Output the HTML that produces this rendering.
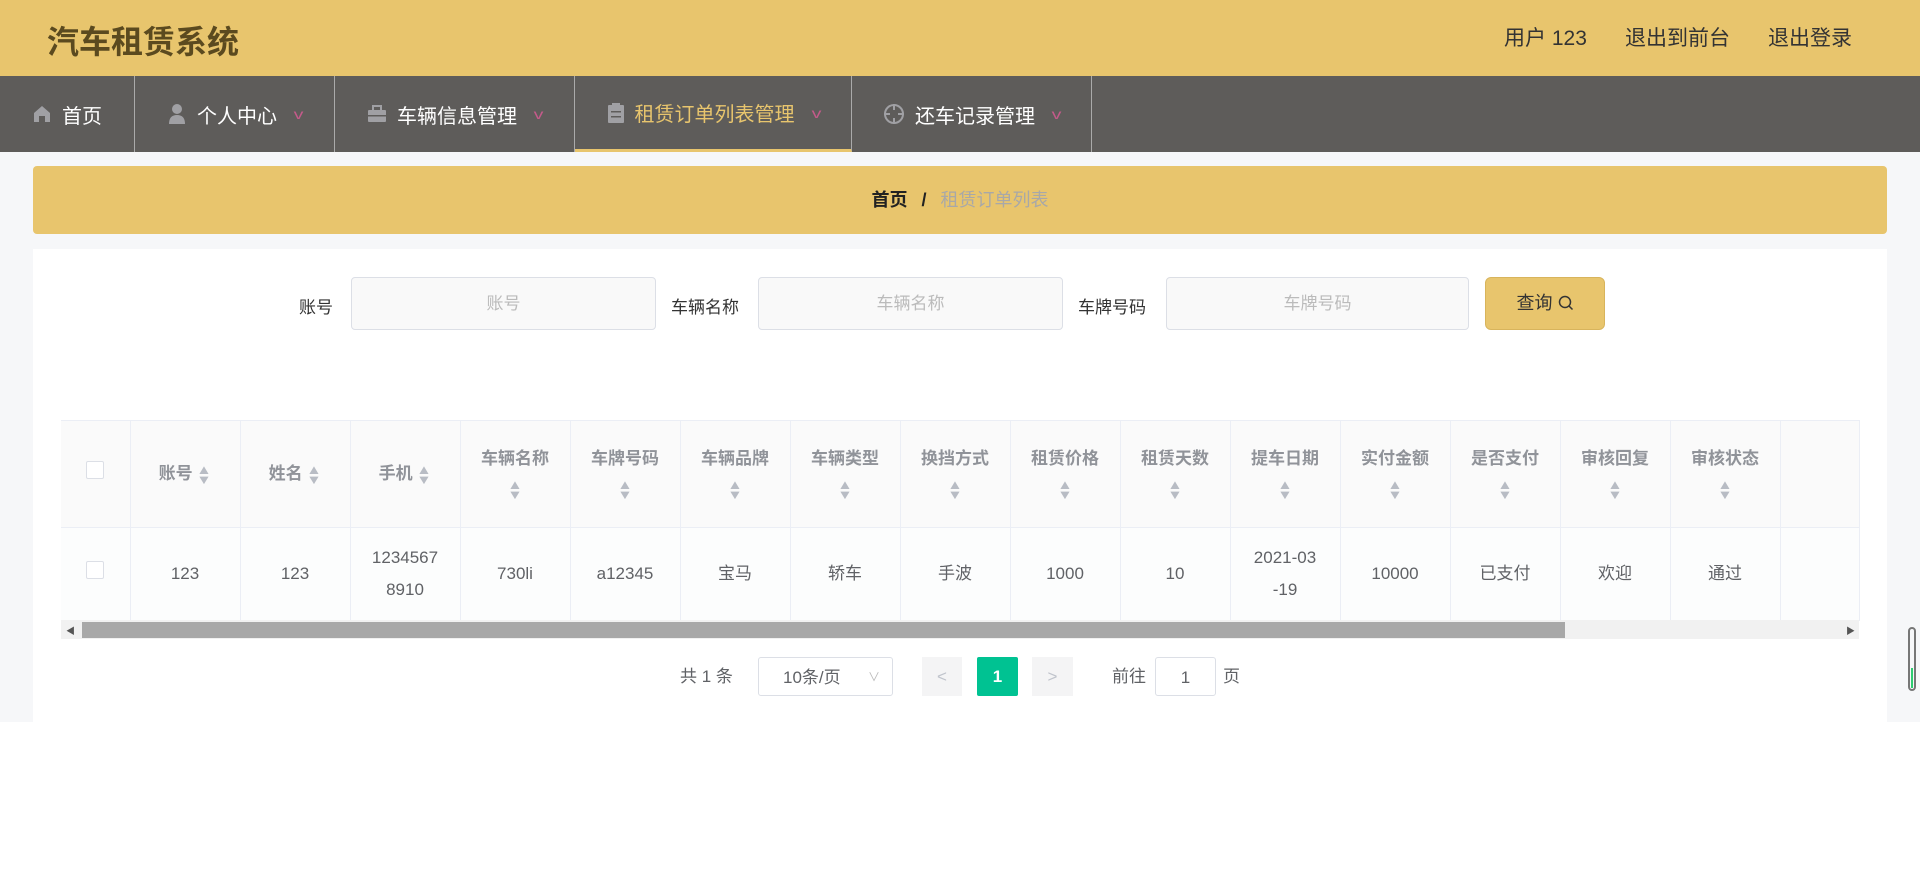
<!DOCTYPE html>
<html><head><meta charset="utf-8"><style>
*{box-sizing:border-box;margin:0;padding:0}
body{width:1920px;height:892px;background:#fff;font-family:"Liberation Sans","Noto Sans CJK SC",sans-serif;position:relative;overflow:hidden}
.hdr{position:absolute;left:0;top:0;width:1920px;height:76px;background:#e8c56d}
.title{position:absolute;left:47px;top:17px;font-size:32px;font-weight:bold;color:#5b4a1f}
.hr{position:absolute;top:22px;font-size:21px;color:#333}
.nav{position:absolute;left:0;top:76px;width:1920px;height:76px;background:#5e5c5a}
.ni{position:absolute;top:0;height:76px;border-right:1px solid #aaa;color:#fff;font-size:20px;display:flex;align-items:center;justify-content:center;gap:10px}
.ni.act{color:#e8c56d;border-bottom:3px solid #e8c56d}
.ar{color:#c45a8a;font-size:14px;margin-left:8px;transform:scaleX(1.4)}
.gray{position:absolute;left:0;top:152px;width:1920px;height:570px;background:#f6f7f9}
.bc{position:absolute;left:33px;top:166px;width:1854px;height:68px;background:#e8c56d;border-radius:4px;text-align:center;line-height:68px;font-size:18px}
.panel{position:absolute;left:33px;top:249px;width:1854px;height:473px;background:#fff}
.lab{position:absolute;top:293px;font-size:17px;color:#333}
.inp{position:absolute;top:277px;height:53px;border:1px solid #dcdfe6;border-radius:4px;background:#f9f9f9;color:#bbb;font-size:17px;text-align:center;line-height:51px}
.btn{position:absolute;left:1485px;top:277px;width:120px;height:53px;background:#e8c56d;border-radius:6px;border:1px solid #d8b45c;font-size:18px;color:#333;text-align:center;line-height:51px}
table{position:absolute;left:61px;top:420px;border-collapse:collapse;table-layout:fixed;width:1798px}
td,th{border-right:1px solid #ebeef5;text-align:center;font-size:17px}
th{height:107px;background:#fafafa;color:#909399;font-weight:bold;border-bottom:1px solid #ebeef5;line-height:30px;padding:0 8px;border-top:1px solid #ebeef5}
td{height:93px;background:#fcfdfd;color:#606266;line-height:32px;padding:0 8px}
.cb{display:inline-block;width:18px;height:18px;border:1px solid #dcdfe6;border-radius:2px;background:#fff}
.s{display:inline-block;width:14px;vertical-align:middle;color:#b8bcc4;font-size:13px;line-height:10px;transform:scaleX(1.2)}
.sb{position:absolute;left:61px;top:620px;width:1798px;height:19px;background:#f1f1f1}
.th{position:absolute;left:82px;top:622px;width:1483px;height:16px;background:#a8a8a8}
.pg{position:absolute;top:657px;height:39px;font-size:17px;color:#606266;line-height:39px;text-align:center}
</style></head><body>
<div class="hdr"><div class="title">汽车租赁系统</div>
<div class="hr" style="left:1504px">用户 123</div><div class="hr" style="left:1625px">退出到前台</div><div class="hr" style="left:1768px">退出登录</div></div>
<div class="nav">
<div class="ni" style="left:0;width:135px"><svg width="20" height="20" viewBox="0 0 20 20"><path d="M10 2 L18 9 V18 H13 V12 H7 V18 H2 V9Z" fill="#a0a0a4"/></svg>首页</div>
<div class="ni" style="left:135px;width:200px"><svg width="20" height="22" viewBox="0 0 20 22"><circle cx="10" cy="6" r="5" fill="#a0a0a4"/><path d="M2 21 Q2 12 10 12 Q18 12 18 21Z" fill="#a0a0a4"/></svg>个人中心<span class="ar">v</span></div>
<div class="ni" style="left:335px;width:240px"><svg width="20" height="20" viewBox="0 0 20 20"><rect x="1" y="6" width="18" height="12" rx="1" fill="#a0a0a4"/><rect x="6" y="2" width="8" height="5" fill="none" stroke="#a0a0a4" stroke-width="2"/><rect x="1" y="11" width="18" height="1.5" fill="#5e5c5a"/></svg>车辆信息管理<span class="ar">v</span></div>
<div class="ni act" style="left:575px;width:277px"><svg width="18" height="22" viewBox="0 0 18 22"><rect x="1" y="3" width="16" height="18" rx="1" fill="#a0a0a4"/><rect x="5" y="1" width="8" height="4" fill="#a0a0a4"/><rect x="4" y="9" width="10" height="1.5" fill="#5e5c5a"/><rect x="4" y="14" width="10" height="1.5" fill="#5e5c5a"/></svg>租赁订单列表管理<span class="ar">v</span></div>
<div class="ni" style="left:852px;width:240px"><svg width="22" height="22" viewBox="0 0 22 22"><circle cx="11" cy="11" r="9" fill="none" stroke="#a0a0a4" stroke-width="2"/><path d="M11 1v6M11 15v6M1 11h6M15 11h6" stroke="#a0a0a4" stroke-width="2"/></svg>还车记录管理<span class="ar">v</span></div>
</div>
<div class="gray"></div>
<div class="bc"><b style="color:#222">首页</b><b style="margin:0 14px;color:#222">/</b><span style="color:#a8a8a8">租赁订单列表</span></div>
<div class="panel"></div>
<div class="lab" style="left:299px">账号</div><div class="inp" style="left:351px;width:305px">账号</div>
<div class="lab" style="left:671px">车辆名称</div><div class="inp" style="left:758px;width:305px">车辆名称</div>
<div class="lab" style="left:1078px">车牌号码</div><div class="inp" style="left:1166px;width:303px">车牌号码</div>
<div class="btn">查询 <svg width="16" height="16" viewBox="0 0 16 16" style="vertical-align:-2px"><circle cx="7" cy="7" r="5.5" fill="none" stroke="#333" stroke-width="1.5"/><path d="M11 11l3.5 3.5" stroke="#333" stroke-width="1.5"/></svg></div>
<table>
<colgroup><col style="width:69px"><col style="width:110px"><col style="width:110px"><col style="width:110px"><col style="width:110px"><col style="width:110px"><col style="width:110px"><col style="width:110px"><col style="width:110px"><col style="width:110px"><col style="width:110px"><col style="width:110px"><col style="width:110px"><col style="width:110px"><col style="width:110px"><col style="width:110px"><col style="width:79px"></colgroup>
<tr><th><span class="cb"></span></th>
<th>账号 <span class="s">▲<br>▼</span></th><th>姓名 <span class="s">▲<br>▼</span></th><th>手机 <span class="s">▲<br>▼</span></th>
<th>车辆名称<br><span class="s">▲<br>▼</span></th><th>车牌号码<br><span class="s">▲<br>▼</span></th><th>车辆品牌<br><span class="s">▲<br>▼</span></th><th>车辆类型<br><span class="s">▲<br>▼</span></th><th>换挡方式<br><span class="s">▲<br>▼</span></th><th>租赁价格<br><span class="s">▲<br>▼</span></th><th>租赁天数<br><span class="s">▲<br>▼</span></th><th>提车日期<br><span class="s">▲<br>▼</span></th><th>实付金额<br><span class="s">▲<br>▼</span></th><th>是否支付<br><span class="s">▲<br>▼</span></th><th>审核回复<br><span class="s">▲<br>▼</span></th><th>审核状态<br><span class="s">▲<br>▼</span></th><th></th></tr>
<tr><td><span class="cb"></span></td><td>123</td><td>123</td><td>1234567<br>8910</td><td>730li</td><td>a12345</td><td>宝马</td><td>轿车</td><td>手波</td><td>1000</td><td>10</td><td>2021-03<br>-19</td><td>10000</td><td>已支付</td><td>欢迎</td><td>通过</td><td></td></tr>
</table>
<div class="sb"></div><div class="th"></div>
<div style="position:absolute;left:66px;top:624px;font-size:9px;color:#555">◀</div>
<div style="position:absolute;left:1846px;top:624px;font-size:9px;color:#555">▶</div>
<div class="pg" style="left:680px">共 1 条</div>
<div class="pg" style="left:758px;width:135px;border:1px solid #dcdfe6;border-radius:3px;text-align:left;padding-left:24px">10条/页<span style="position:absolute;right:12px;color:#bbb;font-size:12px">∨</span></div>
<div class="pg" style="left:922px;width:40px;background:#f4f4f5;color:#c0c4cc">&lt;</div>
<div class="pg" style="left:977px;width:41px;background:#00c292;color:#fff;font-weight:bold;border-radius:2px">1</div>
<div class="pg" style="left:1032px;width:41px;background:#f4f4f5;color:#c0c4cc">&gt;</div>
<div class="pg" style="left:1112px">前往</div>
<div class="pg" style="left:1155px;width:61px;border:1px solid #dcdfe6;border-radius:3px">1</div>
<div class="pg" style="left:1223px">页</div>
<div style="position:absolute;left:1908px;top:627px;width:8px;height:64px;border:2px solid #777;border-radius:4px"><div style="position:absolute;left:1px;bottom:1px;width:2px;height:20px;background:#2ecc71"></div></div>
</body></html>
